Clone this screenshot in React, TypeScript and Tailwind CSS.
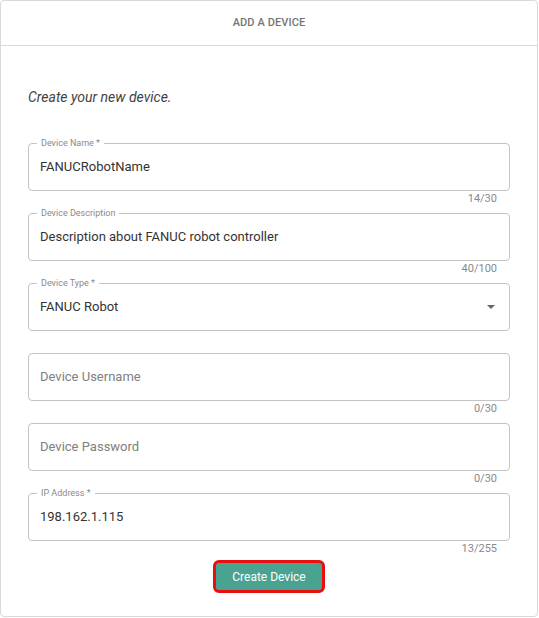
import React from "react";

type FieldProps = {
  label?: string;
  value?: string;
  placeholder?: string;
  helper?: string;
  select?: boolean;
};

function Field({ label, value, placeholder, helper, select }: FieldProps) {
  return (
    <div className="flex flex-col h-[70px]">
      <div className="relative h-[48px] rounded-[4px] border border-[#c4c4c4] flex items-center pl-[11px] pr-[14px]">
        {label && (
          <span className="absolute left-[8px] top-[-7px] bg-white px-[4px] text-[9px] leading-[12px] text-[#8a8a8a]">
            {label}
          </span>
        )}
        {value ? (
          <span className="text-[13px] text-[#333333] flex-1">{value}</span>
        ) : (
          <span className="text-[13px] text-[#808080] flex-1">{placeholder}</span>
        )}
        {select && (
          <svg width="8" height="4" viewBox="0 0 8 4">
            <path d="M0 0 L8 0 L4 4 Z" fill="#666666" />
          </svg>
        )}
      </div>
      {helper && (
        <div className="text-right pr-[13px] mt-[1px] text-[11px] leading-[14px] text-[#8a8a8a]">
          {helper}
        </div>
      )}
    </div>
  );
}

export default function App() {
  return (
    <div
      className="w-[539px] h-[618px] bg-white"
      style={{ fontFamily: "Roboto, 'Liberation Sans', sans-serif" }}
    >
      <div className="w-[538px] h-[617px] border border-[#d9d9d9] rounded-[4px] flex flex-col">
        <div className="h-[45px] border-b border-[#d9d9d9] flex items-center justify-center">
          <span className="text-[11px] font-medium text-[#757575] tracking-[0.1px]">ADD A DEVICE</span>
        </div>
        <div className="flex flex-col px-[27px]">
          <p className="mt-[42px] text-[14px] italic text-[#424242] leading-[18px]">Create your new device.</p>
          <div className="mt-[37px] flex flex-col">
            <Field label="Device Name *" value="FANUCRobotName" helper="14/30" />
            <Field label="Device Description" value="Description about FANUC robot controller" helper="40/100" />
            <Field label="Device Type *" value="FANUC Robot" select />
            <Field placeholder="Device Username" helper="0/30" />
            <Field placeholder="Device Password" helper="0/30" />
            <Field label="IP Address *" value="198.162.1.115" helper="13/255" />
          </div>
          <div className="flex justify-center mt-[-3px]">
            <button className="w-[112px] h-[33px] rounded-[6px] border-[3px] border-[#e80f0f] bg-[#4aa391] text-white text-[12px] font-normal">
              Create Device
            </button>
          </div>
        </div>
      </div>
    </div>
  );
}
